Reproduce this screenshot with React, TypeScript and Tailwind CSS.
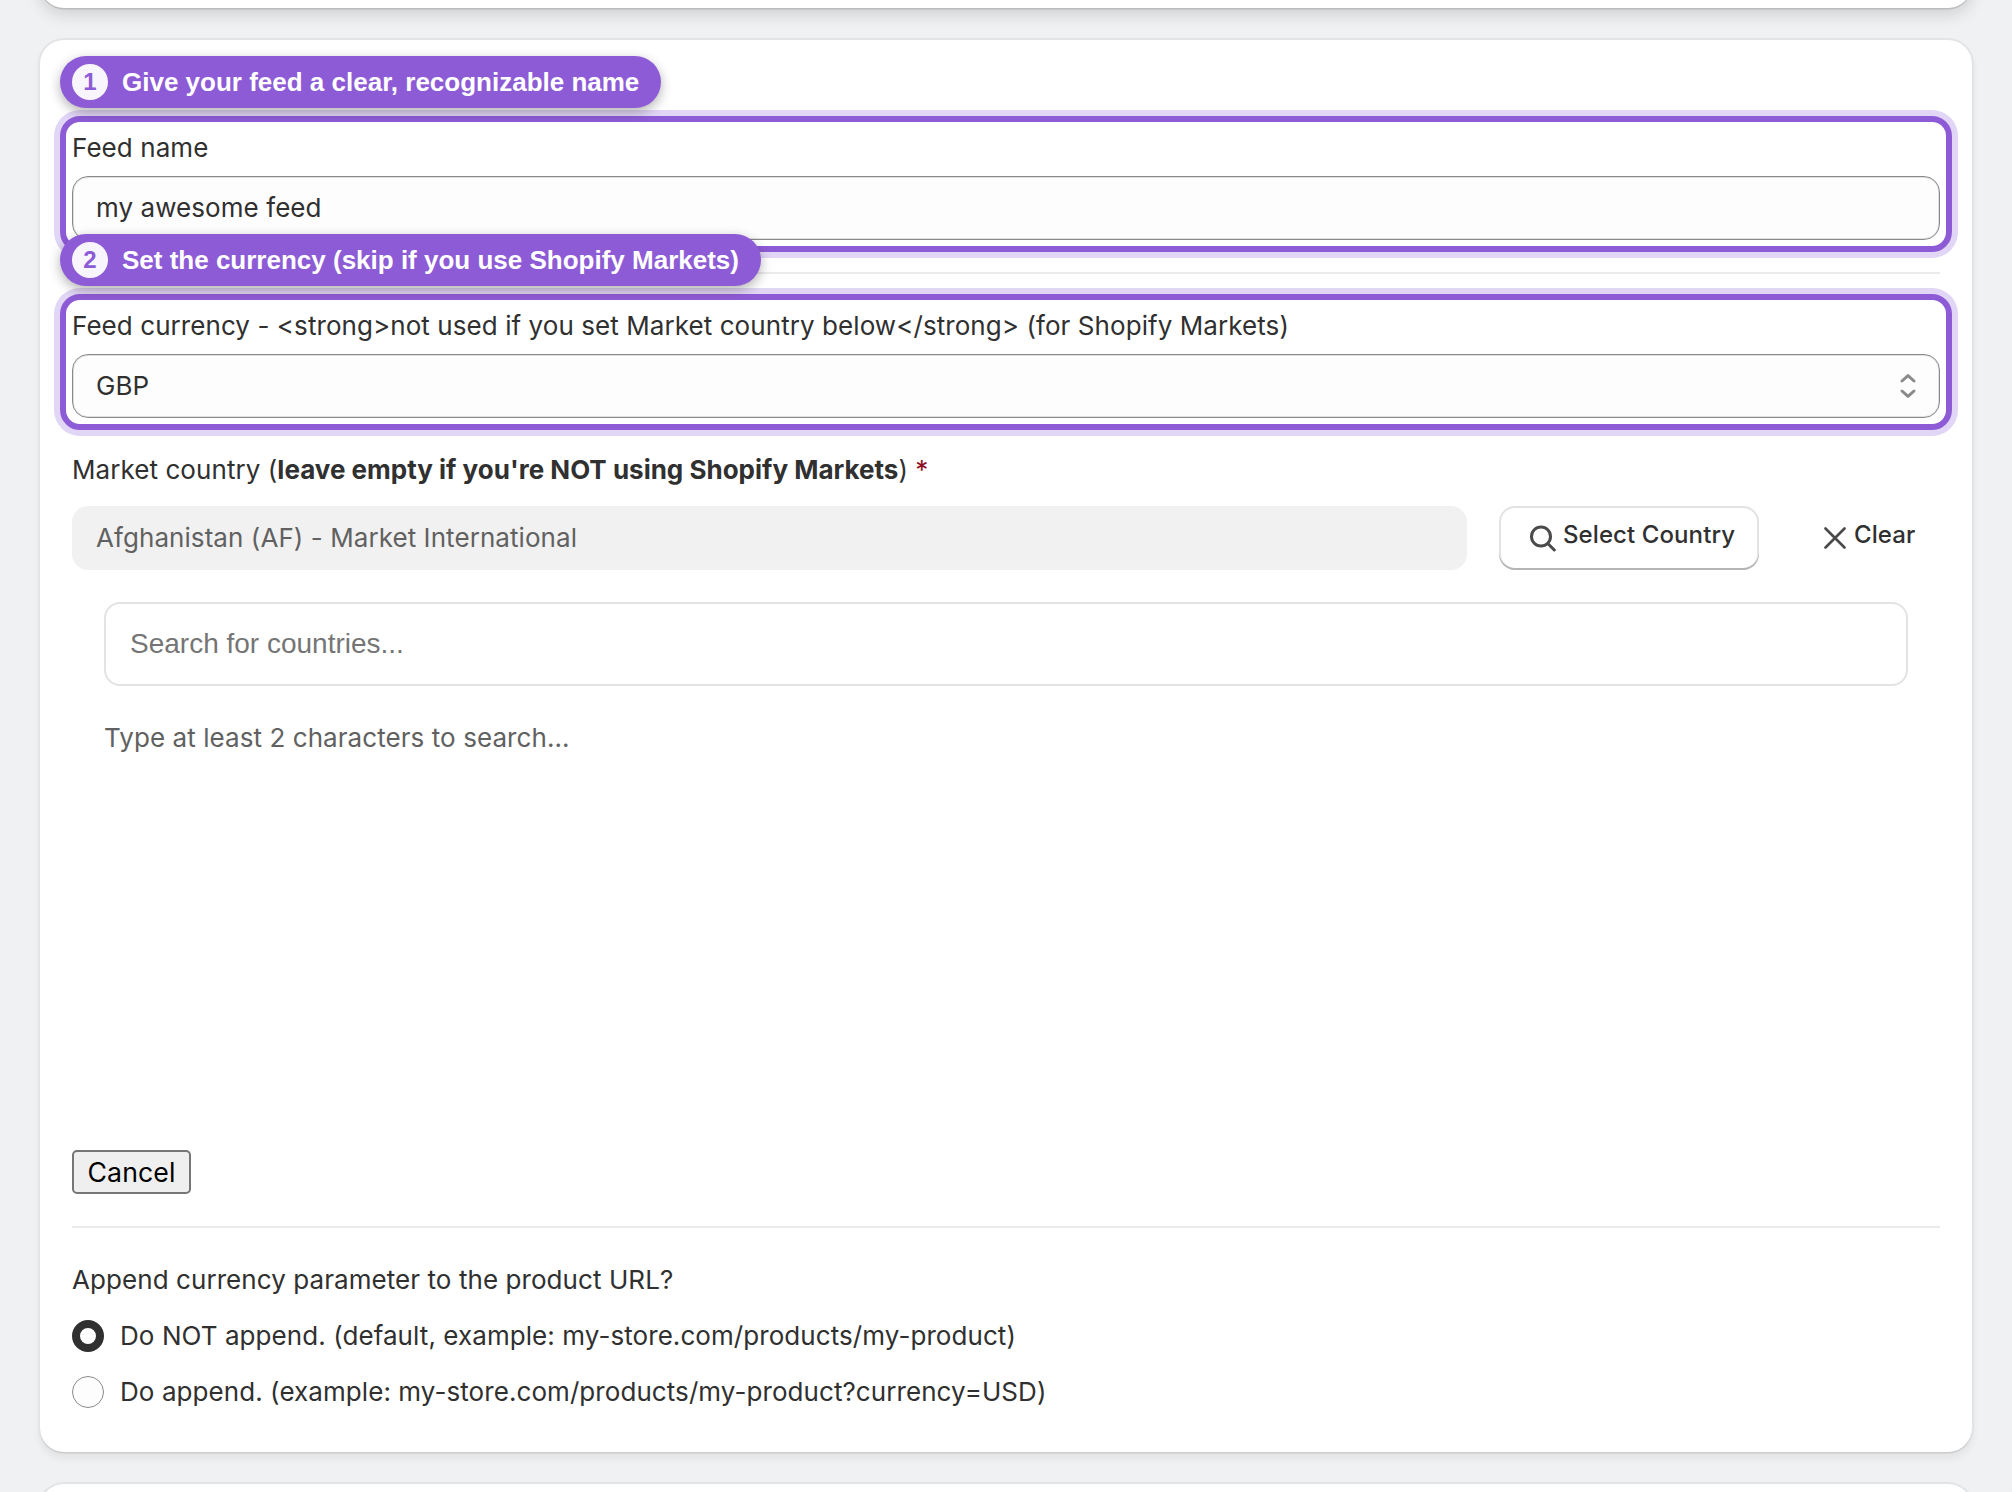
import React from "react";

function StepBadge({ n, children }: { n: number; children: React.ReactNode }) {
  return (
    <div className="absolute -top-[60px] left-0 z-10 flex h-[52px] items-center gap-[14px] rounded-full bg-[#8e5bd6] pl-[12px] pr-[22px] font-['Liberation_Sans',sans-serif] text-[26px] leading-[30px] font-bold tracking-normal whitespace-nowrap text-white shadow-[0_4px_12px_rgba(0,0,0,0.3)]">
      <span className="flex h-9 w-9 items-center justify-center rounded-full bg-[#f8f5fd] text-[24px] leading-none text-[#8e5bd6]">
        {n}
      </span>
      <span>{children}</span>
    </div>
  );
}

function Highlight({ step, title, children }: { step: number; title: string; children: React.ReactNode }) {
  return (
    <div className="relative -mx-3 h-[136px] rounded-[20px] shadow-[0_0_0_6px_#e1d6f5]">
      <StepBadge n={step}>{title}</StepBadge>
      <div className="h-full rounded-[20px] border-[6px] border-[#8e5bd6] px-1.5 pt-[6px]">{children}</div>
    </div>
  );
}

function Field({ label, children }: { label: string; children: React.ReactNode }) {
  return (
    <>
      <div className="mb-2 h-10 text-[26px] leading-10">{label}</div>
      <div className="flex h-16 items-center justify-between rounded-[16px] border border-[#8a8a8a] bg-[#fdfdfd] pr-[22px] pl-[23px] shadow-[inset_0_0_0_1px_#e0e0e0]">
        {children}
      </div>
    </>
  );
}

const cardShadow =
  "bg-white shadow-[0_1.5px_0_0_#cccccc,0_0_0_2px_#e3e4e6,0_6px_8px_rgba(26,26,26,0.07)]";

export default function App() {
  return (
    <div className="flex h-[1492px] w-[2012px] flex-col gap-8 overflow-hidden bg-[#f0f1f3] px-10 font-['Inter',sans-serif] text-[26px] leading-10 tracking-[0.07px] text-[#303030]">
      <div className="-mt-[72px] h-20 shrink-0 rounded-[24px] bg-white shadow-[0_1.5px_0_0_#bcbcbc,0_6px_16px_rgba(26,26,26,0.16)]" />
      <main className={`h-[1412px] shrink-0 rounded-[24px] px-8 pt-[76px] ${cardShadow}`}>
        <Highlight step={1} title="Give your feed a clear, recognizable name">
          <Field label="Feed name">
            <span>my awesome feed</span>
          </Field>
        </Highlight>

        <hr className="mt-5 mb-5 h-[2px] border-0 bg-[#ebebeb]" />

        <Highlight step={2} title="Set the currency (skip if you use Shopify Markets)">
          <Field label="Feed currency - <strong>not used if you set Market country below</strong> (for Shopify Markets)">
            <span>GBP</span>
            <svg className="h-[26px] w-[18px]" viewBox="0 0 18 26" fill="none" stroke="#8a8a8a" strokeWidth="3" strokeLinecap="round" strokeLinejoin="round">
              <path d="M3 8 9 2.6l6 5.4M3 18l6 5.4 6-5.4" />
            </svg>
          </Field>
        </Highlight>

        <div className="mt-5 h-10">
          Market country (<b className="font-bold tracking-normal">leave empty if you're NOT using Shopify Markets</b>){" "}
          <span className="text-[#8e0b21]">*</span>
        </div>

        <div className="mt-4 flex h-16 items-center">
          <div className="flex h-16 w-[1395px] items-center rounded-[16px] bg-[#f1f1f1] pl-6 text-[#616161]">
            Afghanistan (AF) - Market International
          </div>
          <button className="ml-8 flex h-16 w-[260px] items-center rounded-[16px] pl-[31px] text-[24px] font-[550] tracking-[0.09px] shadow-[inset_0_-2px_0_#b5b5b5,inset_0_0_0_2px_#e3e3e3]">
            <svg className="h-[27px] w-[27px]" viewBox="0 0 27 27" fill="none" stroke="#4a4a4a" strokeWidth="3" strokeLinecap="round">
              <circle cx="11" cy="11.5" r="9.5" />
              <path d="m18 18.7 6.3 6.3" />
            </svg>
            <span className="-mt-1.5 ml-[6px]">Select Country</span>
          </button>
          <button className="ml-[65px] flex items-center text-[24px] font-[550]">
            <svg className="h-6 w-[22px]" viewBox="0 0 22 22" fill="none" stroke="#4a4a4a" strokeWidth="2.6" strokeLinecap="round">
              <path d="m1.5 1.5 19 19m0-19-19 19" />
            </svg>
            <span className="-mt-1.5 ml-2">Clear</span>
          </button>
        </div>

        <div className="mx-8 mt-8">
          <input
            className="block h-[84px] w-full rounded-[16px] border-2 border-[#e3e3e3] px-6 font-['Liberation_Sans',sans-serif] text-[28px] font-normal tracking-normal placeholder:text-[#757575]"
            placeholder="Search for countries..."
          />
          <p className="mt-8 text-[#616161]">Type at least 2 characters to search...</p>
        </div>

        <button className="mt-[392px] flex h-11 w-[119px] items-center justify-center rounded-[5px] border-2 border-[#767676] bg-[#efefef] text-[26.67px] text-black">
          Cancel
        </button>

        <hr className="mt-8 h-[2px] border-0 bg-[#ebebeb]" />

        <div className="mt-8">Append currency parameter to the product URL?</div>
        <label className="mt-4 flex items-center gap-4">
          <span className="h-8 w-8 rounded-full border-8 border-[#303030]" />
          Do NOT append. (default, example: my-store.com/products/my-product)
        </label>
        <label className="mt-4 flex items-center gap-4">
          <span className="h-8 w-8 rounded-full border border-[#8a8a8a] bg-[#fdfdfd]" />
          Do append. (example: my-store.com/products/my-product?currency=USD)
        </label>
      </main>
      <div className={`h-20 shrink-0 rounded-[24px] ${cardShadow}`} />
    </div>
  );
}
